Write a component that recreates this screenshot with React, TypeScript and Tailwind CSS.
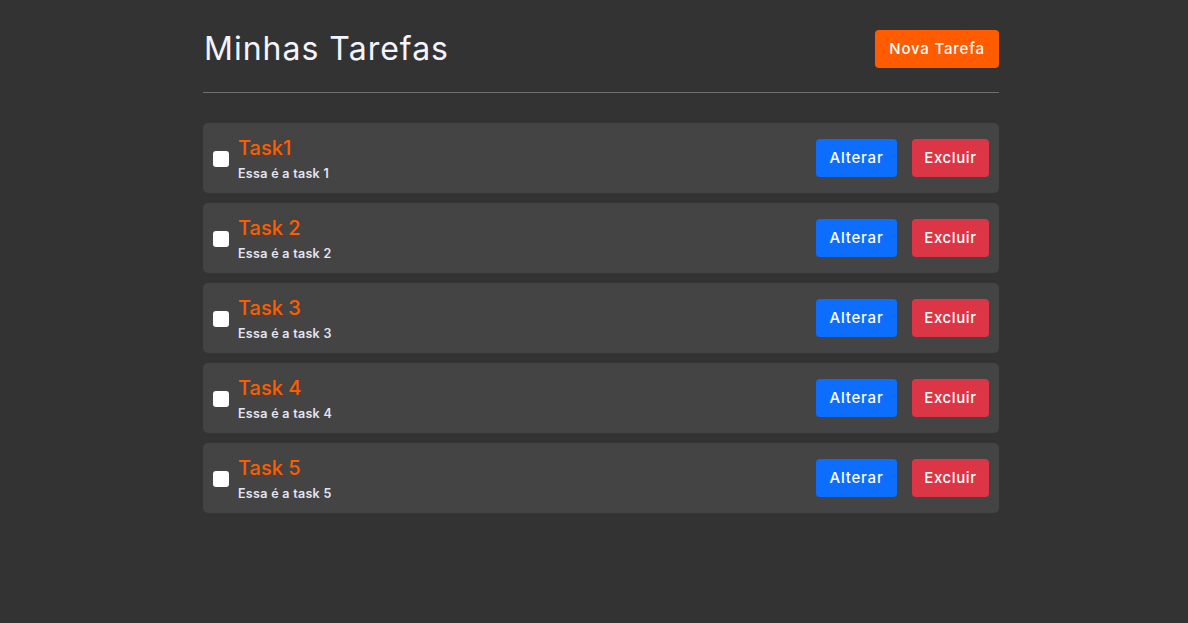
import React from 'react';

const tasks = [
  { title: 'Task1', desc: 'Essa é a task 1' },
  { title: 'Task 2', desc: 'Essa é a task 2' },
  { title: 'Task 3', desc: 'Essa é a task 3' },
  { title: 'Task 4', desc: 'Essa é a task 4' },
  { title: 'Task 5', desc: 'Essa é a task 5' },
];

export default function App() {
  return (
    <div className="min-h-screen bg-[#333333] font-['Inter',sans-serif]">
      <div className="w-[796px] ml-[calc(50%-391px)] pt-[30px]">
        {/* Header */}
        <div className="flex items-center justify-between h-[38px]">
          <h1 className="text-[32px] tracking-[1px] font-normal text-[#f4f4ff] leading-none ml-px">Minhas Tarefas</h1>
          <button className="h-[38px] w-[124px] bg-[#ff5c00] text-white text-[15px] tracking-[0.8px] font-medium rounded-[4px]">
            Nova Tarefa
          </button>
        </div>
        <div className="h-px bg-[#6f6f6f] mt-[24px]" />

        {/* Tasks */}
        <div className="flex flex-col gap-[10px] mt-[30px]">
          {tasks.map((t) => (
            <div key={t.title} className="h-[70px] bg-[#444444] rounded-[5px] flex items-center pl-[10px] pr-[10px]">
              <input type="checkbox" className="w-[16px] h-[16px] appearance-none bg-white rounded-[3px] mt-[2px]" />
              <div className="ml-[9px] mt-[2px] flex flex-col">
                <span className="text-[20px] leading-[24px] font-medium text-[#ff5c00]">{t.title}</span>
                <span className="text-[12.5px] leading-[16px] tracking-[0.3px] font-semibold text-[#e4e4f4] mt-[6px]">{t.desc}</span>
              </div>
              <div className="ml-auto flex gap-[15px]">
                <button className="h-[38px] w-[81px] bg-[#0d6efd] text-white text-[15px] tracking-[0.8px] font-medium rounded-[4px]">
                  Alterar
                </button>
                <button className="h-[38px] w-[77px] bg-[#dc3545] text-white text-[15px] tracking-[0.6px] font-medium rounded-[4px]">
                  Excluir
                </button>
              </div>
            </div>
          ))}
        </div>
      </div>
    </div>
  );
}
